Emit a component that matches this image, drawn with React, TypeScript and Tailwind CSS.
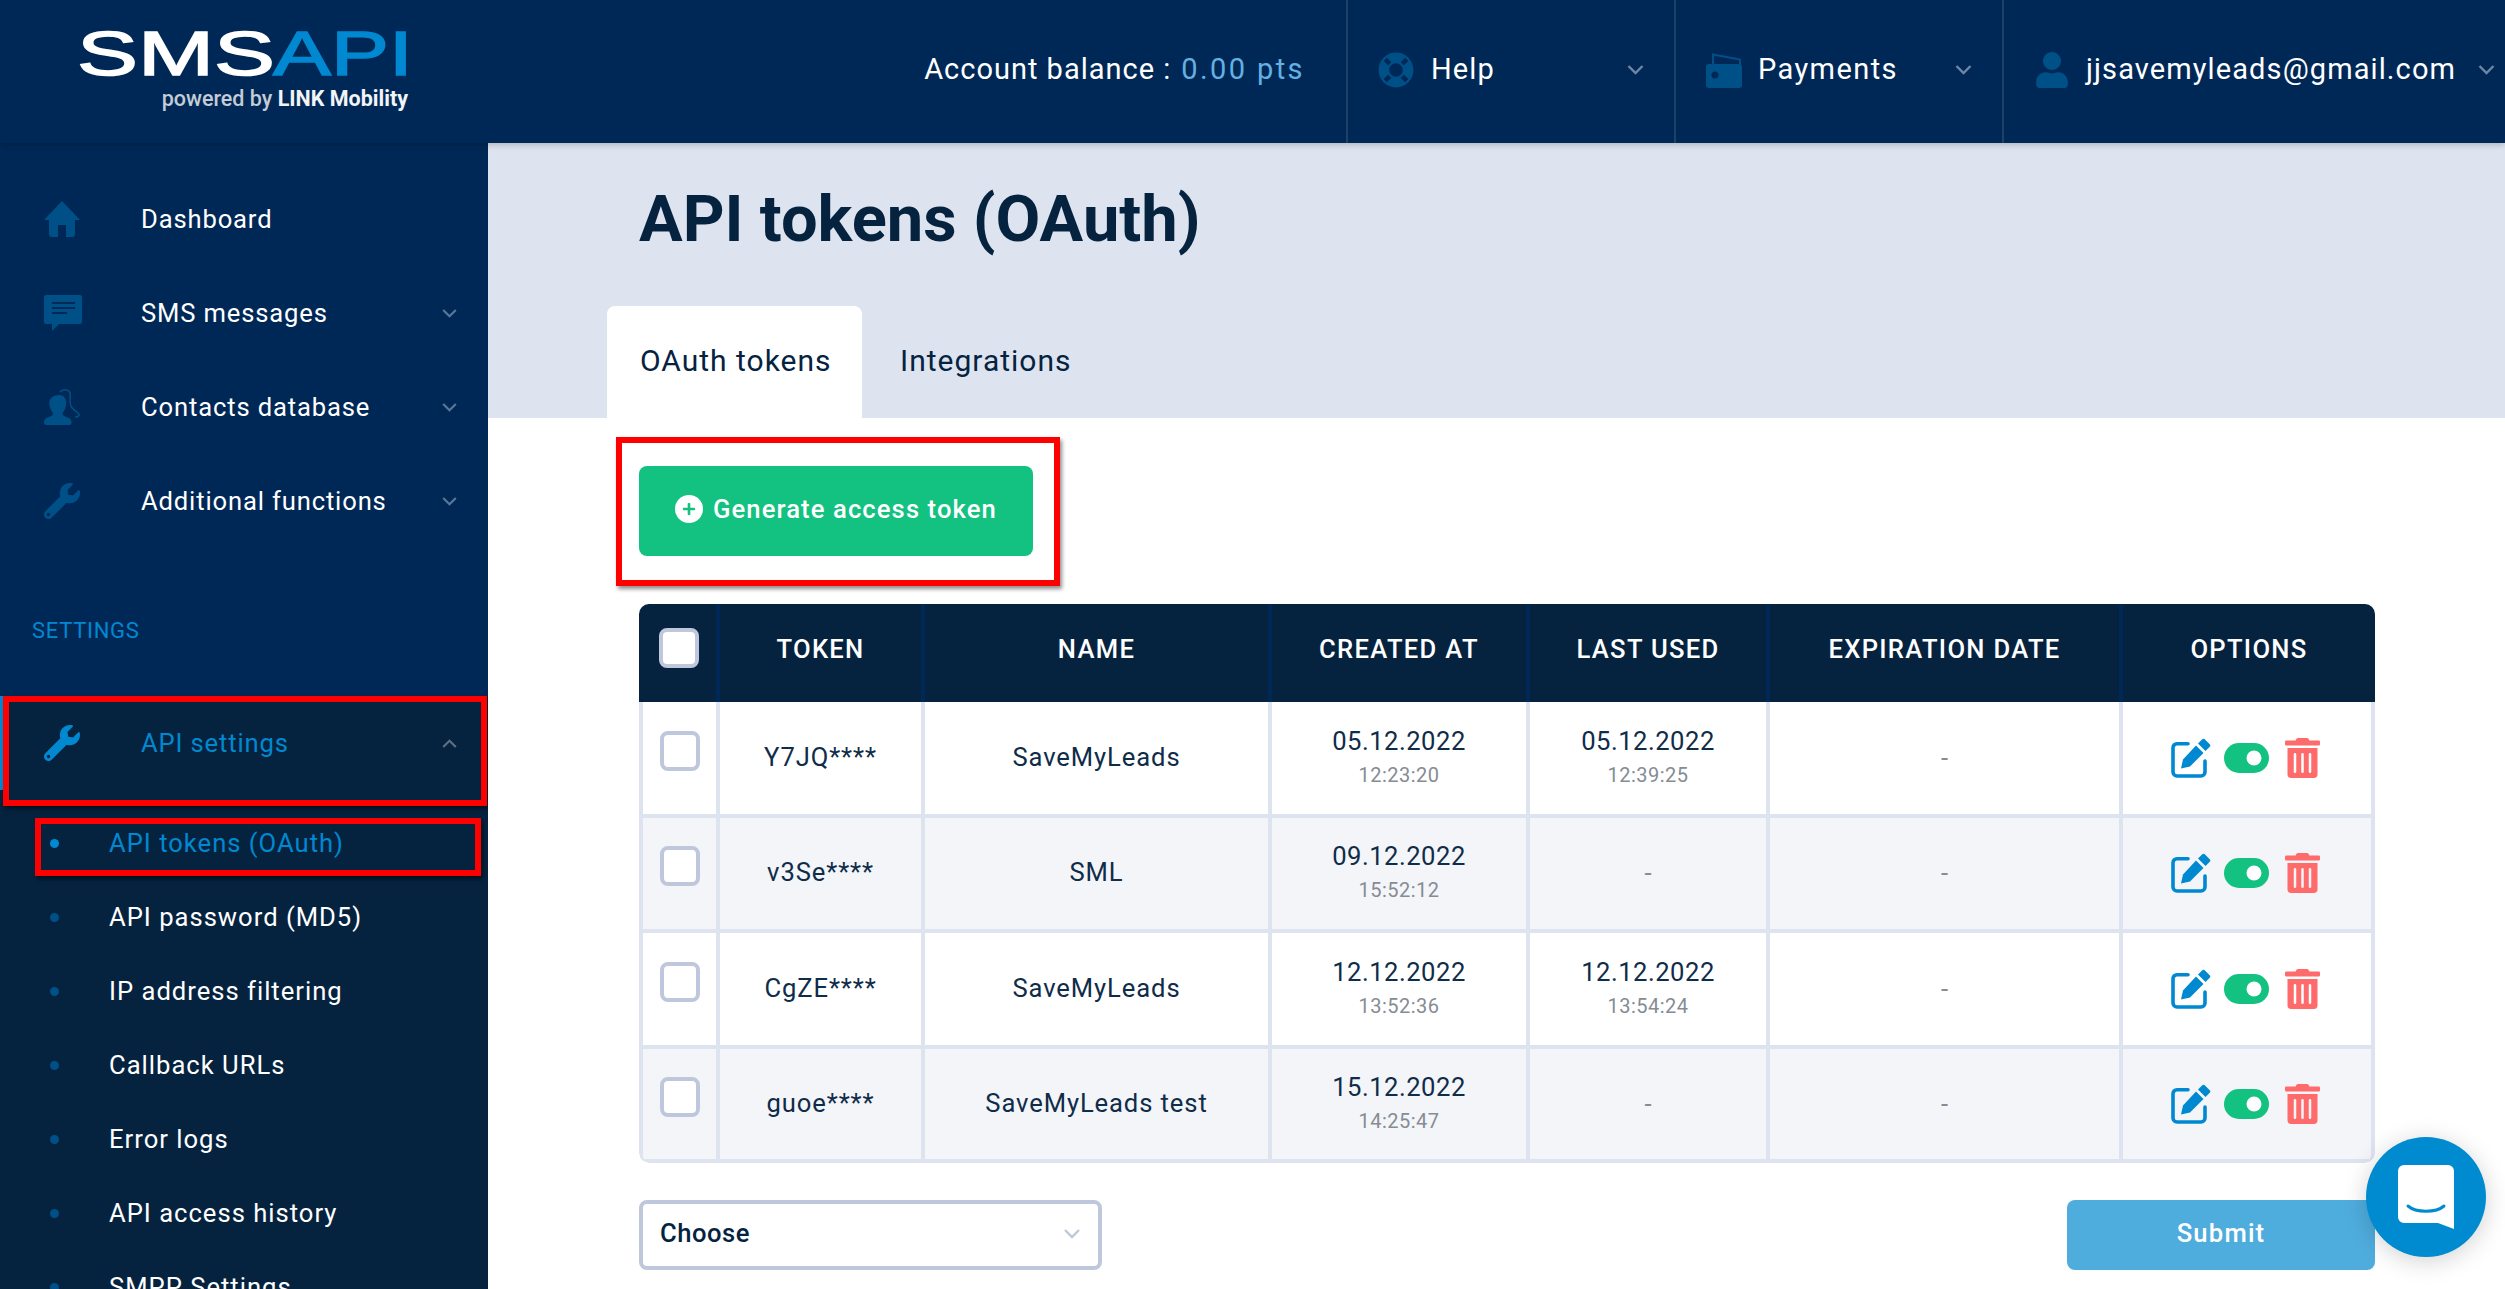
import React from "react";
import { FaWrench, FaLifeRing, FaUser, FaTrashAlt, FaPlus } from "react-icons/fa";

const FONT = "font-['Roboto',sans-serif]";

function Chev({ up, className }: { up?: boolean; className?: string }) {
  return (
    <svg viewBox="0 0 16 10" className={className} fill="none" stroke="currentColor" strokeWidth="2.4">
      <path d={up ? "M1 9l7-7 7 7" : "M1 1l7 7 7-7"} />
    </svg>
  );
}

function Home({ className }: { className?: string }) {
  return (
    <svg viewBox="0 0 36 36" className={className} fill="currentColor">
      <path d="M18 0L36 19H31V33a3 3 0 0 1-3 3H22V24H14V36H8a3 3 0 0 1-3-3V19H0Z" />
    </svg>
  );
}

function Chat({ className }: { className?: string }) {
  return (
    <svg viewBox="0 0 38 36" className={className} fill="currentColor">
      <path fillRule="evenodd" d="M2 0h34a2 2 0 0 1 2 2v25a2 2 0 0 1-2 2H15l-7 7v-7H2a2 2 0 0 1-2-2V2a2 2 0 0 1 2-2zM8 7v2h23V7zm0 5v2h23v-2zm0 5v2h15v-2z" />
    </svg>
  );
}

function Contact({ className }: { className?: string }) {
  return (
    <svg viewBox="0 0 36 36" className={className} fill="currentColor">
      <path d="M15 6c5 0 8 4 7 10-.5 4-2 6-3.500 8 0 2 1 3 4 4 3 1 5 2 5 6 0 1-1 2-2 2H2c-1 0-2-1-2-2 0-4 2-5 5-6 3-1 4-2 4-4-1.500-2-3-4-3.500-8C4 10 9 6 15 6z" />
      <path d="M16 3c3-3 9-3 10 1 1 4-1 9 1 13 1 3 5 5 7 7 2 2 1 4-3 4" fill="none" stroke="currentColor" strokeWidth="1.500" />
    </svg>
  );
}

function Wallet({ className }: { className?: string }) {
  return (
    <svg viewBox="0 0 36 36" className={className}>
      <path d="M7 13V2.500l27 5V13" fill="none" stroke="#005088" strokeWidth="2" />
      <rect x="0" y="12" width="36" height="24" rx="3" fill="#005088" />
      <circle cx="9" cy="23" r="3.500" fill="#002856" />
    </svg>
  );
}

function EditIcon({ className }: { className?: string }) {
  return (
    <svg viewBox="0 0 40 40" className={className} fill="#0088d1">
      <path d="M17 5.700H6a4 4 0 0 0-4 4V34a4 4 0 0 0 4 4h24a4 4 0 0 0 4-4V23" fill="none" stroke="#0088d1" strokeWidth="3.600" strokeLinecap="round" />
      <path d="M10 30.500l2-9L25 7.500l7.500 7.500L19 28.500Z" />
      <path d="M27 5.500l4-4a2 2 0 0 1 3 0l4.500 4.500a2 2 0 0 1 0 3l-4 4Z" />
    </svg>
  );
}

function ToggleIcon({ className }: { className?: string }) {
  return (
    <svg viewBox="0 0 45 30" className={className}>
      <rect width="45" height="30" rx="15" fill="#13c180" />
      <circle cx="30" cy="15" r="7.500" fill="#ffffff" />
    </svg>
  );
}

function NavItem({ icon, label, chev }: { icon: React.ReactNode; label: string; chev?: boolean }) {
  return (
    <div className="flex h-[94px] items-center pl-[44px] pr-[31px]">
      <span className="flex w-[97px] text-[#005088]">{icon}</span>
      <span className="flex-1 text-[25.6px] tracking-[0.85px] text-white">{label}</span>
      {chev && <Chev className="h-[9px] w-[15px] text-[#58779a]" />}
    </div>
  );
}

function SubItem({ label, active }: { label: string; active?: boolean }) {
  return (
    <div className="flex h-[74px] items-center pl-[50px]">
      <span className={`h-[9px] w-[9px] rounded-full ${active ? "bg-[#0088d1]" : "bg-[#005088]"}`} />
      <span className={`ml-[50px] text-[25.6px] tracking-[1px] ${active ? "text-[#0088d1]" : "text-white"}`}>{label}</span>
    </div>
  );
}

const HEAD_COLS = "grid grid-cols-[77px_205px_347px_258px_240px_353px_256px]";
const BODY_COLS = "grid grid-cols-[73px_205px_347px_258px_240px_353px_252px]";

function HeadCell({ children, first }: { children?: React.ReactNode; first?: boolean }) {
  return (
    <div className={`flex items-center justify-center pb-[8px] text-[25.6px] font-medium tracking-[1.3px] text-white ${first ? "" : "border-l-4 border-[#002856]"}`}>
      {children}
    </div>
  );
}

function Cell({ children, first }: { children?: React.ReactNode; first?: boolean }) {
  return (
    <div className={`flex flex-col items-center justify-center text-[25.6px] text-[#0f2c49] ${first ? "" : "border-l-4 border-[#dde3ef]"}`}>
      {children}
    </div>
  );
}

function TextCell({ children }: { children?: React.ReactNode }) {
  return (
    <Cell>
      <span className="pb-[2px] tracking-[0.9px]">{children}</span>
    </Cell>
  );
}

function DateCell({ date, time }: { date?: string; time?: string }) {
  return (
    <Cell>
      {date ? (
        <>
          <span className="leading-[34px] tracking-[0.5px]">{date}</span>
          <span className="text-[20px] leading-[34px] tracking-[0.5px] text-[#868c94]">{time}</span>
        </>
      ) : (
        <span className="text-[#868c94]">-</span>
      )}
    </Cell>
  );
}

function CheckBox({ className }: { className?: string }) {
  return <span className={`block h-[40px] w-[40px] rounded-[8px] border-[4px] border-[#bfc7dc] bg-white ${className ?? ""}`} />;
}

const rows = [
  { token: "Y7JQ****", name: "SaveMyLeads", cd: "05.12.2022", ct: "12:23:20", ud: "05.12.2022", ut: "12:39:25" },
  { token: "v3Se****", name: "SML", cd: "09.12.2022", ct: "15:52:12" },
  { token: "CgZE****", name: "SaveMyLeads", cd: "12.12.2022", ct: "13:52:36", ud: "12.12.2022", ut: "13:54:24" },
  { token: "guoe****", name: "SaveMyLeads test", cd: "15.12.2022", ct: "14:25:47" },
];

export default function App() {
  return (
    <div className={`flex h-[1289px] w-[2505px] flex-col overflow-hidden bg-white ${FONT}`}>
      <header className="z-10 flex h-[143px] shrink-0 bg-[#002856] shadow-[0_2px_6px_rgba(0,0,0,0.2)]">
        <div className="relative w-[488px] shrink-0">
          <svg viewBox="0 0 340 100" className="absolute left-[76px] top-[26px] h-[100px] w-[340px]">
            <text x="1" y="49" fontFamily="Liberation Sans" fontSize="63" fontWeight="400" fill="#ffffff" stroke="#ffffff" strokeWidth="1.500" textLength="198" lengthAdjust="spacingAndGlyphs">SMS</text>
            <text x="197" y="49" fontFamily="Liberation Sans" fontSize="63" fontWeight="400" fill="#0088d1" stroke="#0088d1" strokeWidth="1.500" textLength="140" lengthAdjust="spacingAndGlyphs">API</text>
            <text x="332" y="80" textAnchor="end" fontFamily="Roboto" fontSize="21.500" fontWeight="500" fill="#c4ccd6">
              powered by <tspan fontWeight="700" fill="#f2f4f7">LINK Mobility</tspan>
            </text>
          </svg>
        </div>
        <div className="flex flex-1 items-stretch justify-end text-[29px] text-white">
          <div className="flex items-center pb-[4px] pr-[41px] tracking-[1px]">
            Account balance :<span className="ml-[10px] tracking-[2.4px] text-[#64b0e2]">0.00 pts</span>
          </div>
          <div className="flex w-[328px] items-center border-l-2 border-[#1e4168] pb-[4px] pl-[30px]">
            <FaLifeRing className="h-[36px] w-[36px] text-[#005088]" />
            <span className="ml-[17px] flex-1 tracking-[1.1px]">Help</span>
            <Chev className="mr-[30px] h-[10px] w-[17px] text-[#6d87a4]" />
          </div>
          <div className="flex w-[328px] items-center border-l-2 border-[#1e4168] pb-[4px] pl-[30px]">
            <Wallet className="h-[36px] w-[36px]" />
            <span className="ml-[16px] flex-1 tracking-[1.4px]">Payments</span>
            <Chev className="mr-[30px] h-[10px] w-[17px] text-[#6d87a4]" />
          </div>
          <div className="flex w-[503px] items-center border-l-2 border-[#1e4168] pb-[4px] pl-[30px]">
            <FaUser className="h-[36px] w-[36px] text-[#005088]" />
            <span className="ml-[16px] flex-1 tracking-[1.1px]">jjsavemyleads@gmail.com</span>
            <Chev className="mr-[10px] h-[10px] w-[17px] text-[#6d87a4]" />
          </div>
        </div>
      </header>

      <div className="flex min-h-0 flex-1">
        <aside className="flex w-[488px] shrink-0 flex-col overflow-hidden bg-[#002856]">
          <div className="shrink-0 pt-[29px]">
            <NavItem icon={<Home className="h-[36px] w-[36px]" />} label="Dashboard" />
            <NavItem icon={<Chat className="h-[36px] w-[38px]" />} label="SMS messages" chev />
            <NavItem icon={<Contact className="h-[36px] w-[36px]" />} label="Contacts database" chev />
            <NavItem icon={<FaWrench className="h-[36px] w-[36px]" />} label="Additional functions" chev />
          </div>
          <div className="flex h-[148px] shrink-0 items-center pl-[32px] pt-[16px] text-[22px] tracking-[0.7px] text-[#0088d1]">SETTINGS</div>
          <div className="shrink-0 grow bg-[#05233f]">
            <div className="relative flex h-[94px] items-center border-l-[3px] border-[#0088d1] pl-[41px] pr-[31px]">
              <span className="flex w-[97px] text-[#0088d1]"><FaWrench className="h-[36px] w-[36px]" /></span>
              <span className="flex-1 text-[25.6px] tracking-[0.85px] text-[#0088d1]">API settings</span>
              <Chev up className="h-[9px] w-[15px] text-[#5d6f83]" />
              <div className="absolute left-0 top-0 h-[110px] w-[484px] border-[6px] border-[#ff0000] shadow-[2px_3px_4px_rgba(0,0,0,0.5)]" />
            </div>
            <div className="relative mt-[16px]">
              <SubItem label="API tokens (OAuth)" active />
              <SubItem label="API password (MD5)" />
              <SubItem label="IP address filtering" />
              <SubItem label="Callback URLs" />
              <SubItem label="Error logs" />
              <SubItem label="API access history" />
              <SubItem label="SMPP Settings" />
              <div className="absolute left-[35px] top-[12px] h-[58px] w-[446px] border-[6px] border-[#ff0000] shadow-[2px_3px_4px_rgba(0,0,0,0.5)]" />
            </div>
          </div>
        </aside>

        <main className="relative min-w-0 flex-1">
          <div className="flex h-[275px] flex-col bg-[#dde3ef] pl-[151px]">
            <h1 className="pt-[41px] text-[65px] font-bold leading-[70px] text-[#05233f]">API tokens (OAuth)</h1>
            <div className="mt-auto -ml-[32px] flex h-[112px] text-[30px] tracking-[1px] text-[#05233f]">
              <div className="w-[255px] rounded-t-[8px] bg-white pl-[33px] pt-[32px]">OAuth tokens</div>
              <div className="pl-[38px] pt-[32px]">Integrations</div>
            </div>
          </div>

          <div className="pl-[151px] pr-[130px]">
            <div className="relative mt-[48px] h-[90px] w-[394px]">
              <button className="flex h-full w-full items-center rounded-[8px] bg-[#13c180] pb-[4px] pl-[36px] text-[25.6px] font-medium tracking-[1.1px] text-white">
                <span className="mr-[10px] flex h-[28px] w-[28px] items-center justify-center rounded-full bg-white text-[#13c180]"><FaPlus className="h-[14px] w-[14px]" /></span>
                Generate access token
              </button>
              <div className="absolute -left-[23px] -top-[29px] h-[149px] w-[444px] border-[6px] border-[#ff0000] shadow-[2px_3px_4px_rgba(0,0,0,0.45)]" />
            </div>

            <div className="mt-[48px] overflow-hidden rounded-[10px]">
              <div className={`${HEAD_COLS} h-[98px] bg-[#05233f]`}>
                <HeadCell first><CheckBox className="-mt-[2px] ml-[3px]" /></HeadCell>
                <HeadCell>TOKEN</HeadCell>
                <HeadCell>NAME</HeadCell>
                <HeadCell>CREATED AT</HeadCell>
                <HeadCell>LAST USED</HeadCell>
                <HeadCell>EXPIRATION DATE</HeadCell>
                <HeadCell>OPTIONS</HeadCell>
              </div>
              <div className="overflow-hidden rounded-b-[10px] border-x-4 border-[#dde3ef]">
                {rows.map((r, i) => (
                  <div key={r.token} className={`${BODY_COLS} h-[115.500px] border-b-4 border-[#dde3ef] last:h-[114.500px] ${i % 2 ? "bg-[#f3f5f9]" : "bg-white"}`}>
                    <Cell first><CheckBox className="-mt-[14px]" /></Cell>
                    <TextCell>{r.token}</TextCell>
                    <TextCell>{r.name}</TextCell>
                    <DateCell date={r.cd} time={r.ct} />
                    <DateCell date={r.ud} time={r.ut} />
                    <DateCell />
                    <Cell>
                      <div className="flex items-center pr-[4px]">
                        <EditIcon className="h-[40px] w-[40px]" />
                        <ToggleIcon className="ml-[13px] h-[30px] w-[45px]" />
                        <FaTrashAlt className="ml-[16px] h-[40px] w-[35px] text-[#ff6b6b]" />
                      </div>
                    </Cell>
                  </div>
                ))}
              </div>
            </div>

            <div className="mt-[37px] flex items-start justify-between">
              <div className="flex h-[70px] w-[463px] items-center justify-between rounded-[8px] border-[4px] border-[#bfc7dc] pb-[3px] pl-[17px] pr-[17px] text-[25.6px] font-medium tracking-[0.5px] text-[#05233f]">
                Choose
                <Chev className="h-[10px] w-[18px] text-[#bfc7dc]" />
              </div>
              <button className="h-[70px] w-[308px] rounded-[8px] bg-[#4fadde] pb-[3px] text-[25.6px] font-medium tracking-[1.2px] text-white">Submit</button>
            </div>
          </div>

          <div className="absolute left-[1878px] top-[994px] flex h-[120px] w-[120px] items-center justify-center rounded-full bg-[#008acf] shadow-[0_4px_24px_rgba(0,0,0,0.18)]">
            <svg viewBox="0 0 56 64" className="h-[64px] w-[56px]">
              <path fill="#ffffff" d="M6 0h44a6 6 0 0 1 6 6v58l-16-6H6a6 6 0 0 1-6-6V6a6 6 0 0 1 6-6z" />
              <path fill="none" stroke="#008acf" strokeWidth="3" strokeLinecap="round" d="M10 41c8 7 28 7 36 0" />
            </svg>
          </div>
        </main>
      </div>
    </div>
  );
}
